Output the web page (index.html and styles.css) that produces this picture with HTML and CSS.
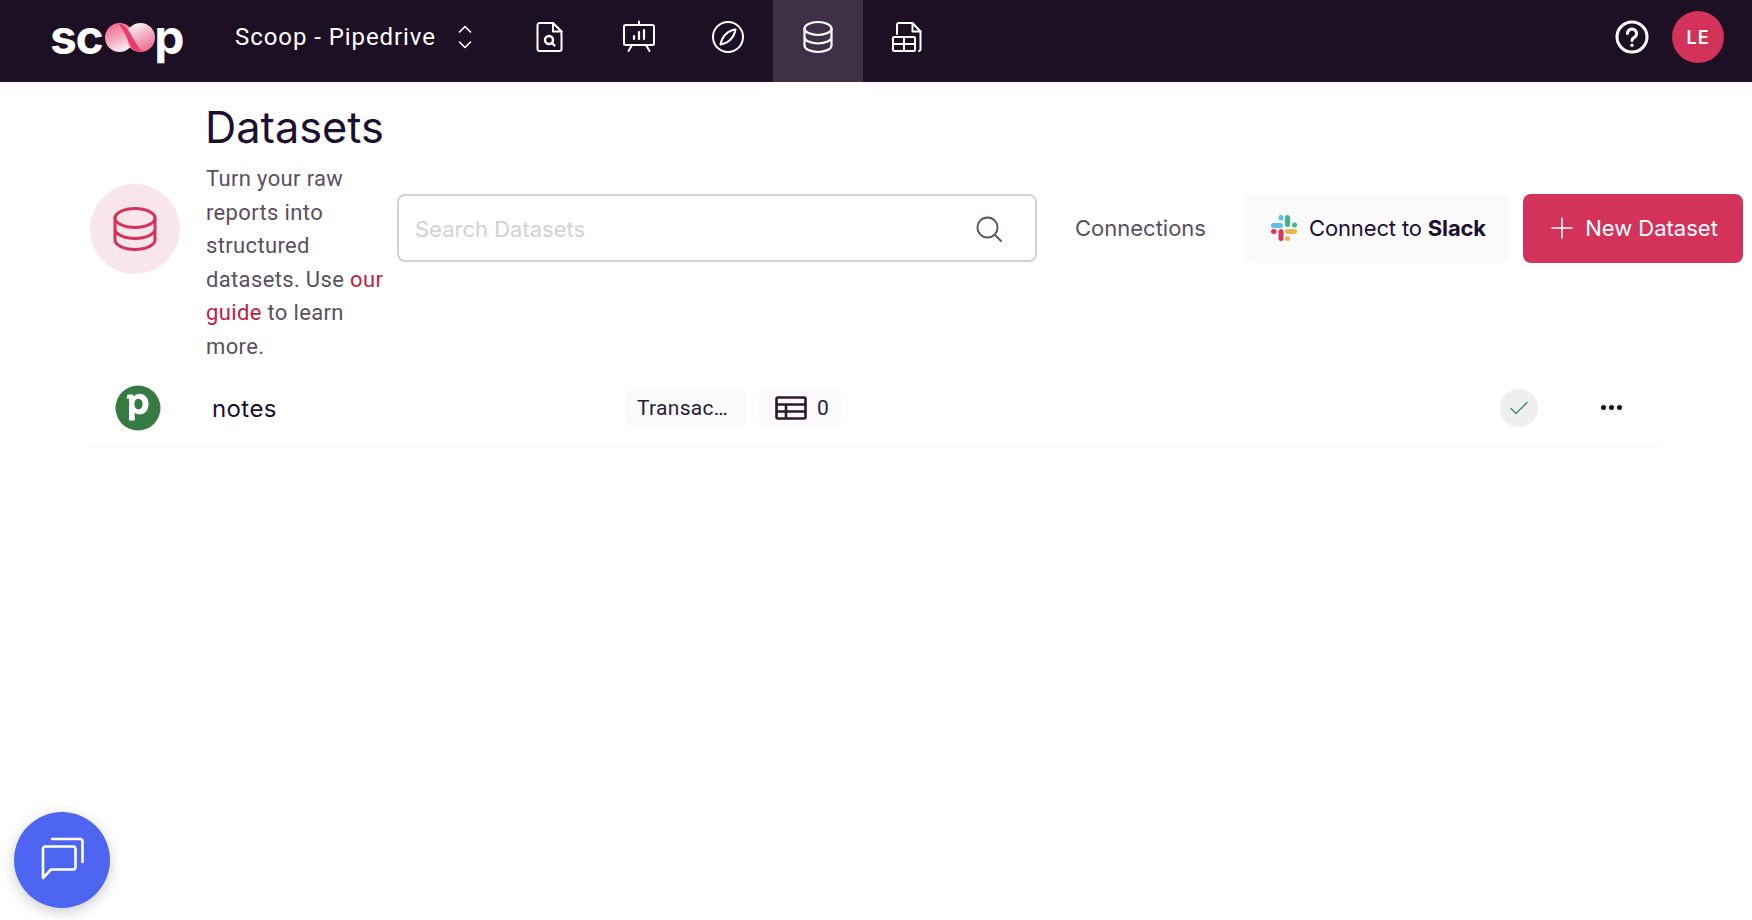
FILE: index.html
```html
<!DOCTYPE html>
<html lang="en">
<head>
<meta charset="utf-8">
<title>Datasets</title>
<link rel="stylesheet" href="styles.css">
</head>
<body>
<header class="topbar">
  <div class="logo">
    <span class="logo-text">sc</span>
    <svg class="logo-mark" viewBox="0 0 50 29" width="50" height="29" aria-hidden="true">
      <defs>
        <linearGradient id="lg1" x1="0.2" y1="0.05" x2="0.65" y2="1">
          <stop offset="0" stop-color="#ef6a90"/><stop offset="0.55" stop-color="#f3b0c3"/><stop offset="1" stop-color="#fdf3f6"/>
        </linearGradient>
        <linearGradient id="lg2" x1="0.8" y1="0.95" x2="0.35" y2="0">
          <stop offset="0" stop-color="#ef6a90"/><stop offset="0.55" stop-color="#f3b0c3"/><stop offset="1" stop-color="#fdf3f6"/>
        </linearGradient>
      </defs>
      <circle cx="14.5" cy="14.5" r="14.5" fill="url(#lg1)"/>
      <circle cx="35.5" cy="14.5" r="14.5" fill="url(#lg2)"/>
      <path d="M13 0.5 C20 1 23 6 25 9.5 C27 13 30 24 38 28.6 C30 29.5 26 25 24.5 21 C22 16 19 5 13 0.5Z" fill="#ee3a6c"/>
      <path d="M14 1 L24 9 L36 28 L26 20Z" fill="#ee3a6c"/>
    </svg>
    <span class="logo-text">p</span>
  </div>
  <div class="workspace">
    <span>Scoop - Pipedrive</span>
    <svg width="14" height="24" viewBox="0 0 14 24" fill="none" stroke="#fff" stroke-width="1.6" stroke-linecap="round" stroke-linejoin="round" aria-hidden="true"><path d="M1.5 7 7 1.5 12.5 7M1.5 17 7 22.5 12.5 17"/></svg>
  </div>
  <nav class="nav">
    <a class="nav-item">
      <svg class="shift-r" width="30" height="34" viewBox="0 0 30 34" fill="none" stroke="#fff" stroke-width="2" stroke-linecap="round" stroke-linejoin="round" aria-hidden="true"><path d="M19 3H5.5A2 2 0 0 0 3.500 5V29a2 2 0 0 0 2 2h20a2 2 0 0 0 2-2V11.500Z"/><path d="M19 3v8.500h8.500"/><circle cx="15" cy="20" r="4" stroke-width="2.400"/><path d="M18 23l2.500 2.500" stroke-width="2.400"/></svg>
    </a>
    <a class="nav-item">
      <svg class="shift-r" width="34" height="34" viewBox="0 0 34 34" fill="none" stroke="#fff" stroke-width="2" stroke-linecap="round" stroke-linejoin="round" aria-hidden="true"><rect x="2" y="5" width="30" height="20" rx="1.500"/><path d="M17 1.500V5M10 25l-3.500 6M24 25l3.500 6"/><path d="M12 19v-3M17 19v-7M22 19v-9" stroke-width="2.200"/></svg>
    </a>
    <a class="nav-item">
      <svg width="34" height="34" viewBox="0 0 34 34" fill="none" stroke="#fff" stroke-width="2" stroke-linecap="round" stroke-linejoin="round" aria-hidden="true"><circle cx="17" cy="17" r="15"/><path d="M24.500 9.500C17 10.500 11 16 9.500 24.500 17 23.500 23 18 24.500 9.500Z"/></svg>
    </a>
    <a class="nav-item is-active">
      <svg width="32" height="34" viewBox="0 0 32 34" fill="none" stroke="#fff" stroke-width="2.200" stroke-linecap="round" stroke-linejoin="round" aria-hidden="true"><ellipse cx="16" cy="8.500" rx="13.500" ry="6.500"/><path d="M2.500 8.500V25.500c0 3.600 6 6.500 13.500 6.500s13.500-2.900 13.500-6.500V8.500M2.500 17c0 3.600 6 6.500 13.500 6.500s13.500-2.900 13.500-6.500"/></svg>
    </a>
    <a class="nav-item">
      <svg class="shift-l" width="32" height="34" viewBox="0 0 32 34" fill="none" stroke="#fff" stroke-width="2" stroke-linecap="round" stroke-linejoin="round" aria-hidden="true"><path d="M6 14V5a2 2 0 0 1 2-2h13.500l8 8.500V29a2 2 0 0 1-1.500 2"/><path d="M21.500 3v8.500h8"/><rect x="2" y="17" width="22" height="14" rx="1"/><path d="M2 24h22M13 17v14"/></svg>
    </a>
  </nav>
  <div class="top-right">
    <svg width="34" height="34" viewBox="0 0 34 34" fill="none" stroke="#fff" stroke-width="3" stroke-linecap="round" stroke-linejoin="round" aria-hidden="true"><circle cx="17" cy="17" r="15"/><path d="M12.500 13.500a4.500 4.500 0 1 1 6.800 3.900c-1.500.9-2.300 1.700-2.300 3.100"/><path d="M17 25.200v.1" stroke-width="3.400"/></svg>
    <div class="avatar">LE</div>
  </div>
</header>

<main class="page">
  <section class="page-head">
    <div class="head-circle">
      <svg width="44" height="46" viewBox="0 0 44 46" fill="none" stroke="#d3325a" stroke-width="3" stroke-linecap="round" stroke-linejoin="round" aria-hidden="true"><ellipse cx="22" cy="12" rx="20" ry="9.500"/><path d="M2 12V34c0 5.200 9 9.500 20 9.500S42 39.200 42 34V12M2 23c0 5.200 9 9.500 20 9.500S42 28.200 42 23"/></svg>
    </div>
    <div class="head-text">
      <h1 class="title">Datasets</h1>
      <p class="desc">Turn your raw reports into structured datasets. Use <a class="link">our</a> <a class="link">guide</a> to learn more.</p>
    </div>
    <div class="search">
      <span class="search-ph">Search Datasets</span>
      <svg width="28" height="28" viewBox="0 0 28 28" fill="none" stroke="#5a5060" stroke-width="1.800" stroke-linecap="round" aria-hidden="true"><circle cx="12.500" cy="12.500" r="10"/><path d="M20 20l6 6"/></svg>
    </div>
    <div class="connections">Connections</div>
    <button class="btn btn-slack">
      <svg width="26" height="26" viewBox="0 0 26 26" aria-hidden="true">
        <rect x="0" y="8" width="12" height="5" rx="2.500" fill="#5cbfee"/><rect x="7.500" y="0" width="5" height="5.500" rx="2.500" fill="#5cbfee"/>
        <rect x="14" y="0" width="5" height="12" rx="2.500" fill="#3fb58a"/><rect x="21" y="7.500" width="5" height="5" rx="2.500" fill="#3fb58a"/>
        <rect x="14" y="14" width="12" height="5" rx="2.500" fill="#e8b84e"/><rect x="14" y="21" width="5" height="5" rx="2.500" fill="#e8b84e"/>
        <rect x="7.500" y="14" width="5" height="12" rx="2.500" fill="#d9365e"/><rect x="0" y="14" width="5.500" height="5" rx="2.500" fill="#d9365e"/>
      </svg>
      <span>Connect to <b>Slack</b></span>
    </button>
    <button class="btn btn-new">
      <svg width="22" height="22" viewBox="0 0 22 22" fill="none" stroke="#fff" stroke-width="1.600" stroke-linecap="round" aria-hidden="true"><path d="M11 1v20M1 11h20"/></svg>
      <span>New Dataset</span>
    </button>
  </section>

  <section class="row">
    <svg class="row-logo" width="46" height="46" viewBox="0 0 46 46" aria-hidden="true"><circle cx="23" cy="23" r="22.500" fill="#367a44"/><path transform="translate(0 -3.500)" d="M12.500 13h5.500l.6 2.300c1.400-2 3.600-3 6-3 5.400 0 9 4.300 9 10.300 0 6.200-3.800 10.400-9 10.400-2 0-3.700-.7-4.900-2V39h-5.700V17.700c0-.5-.2-.7-.7-.7h-1.800ZM23.300 17.200c-2.600 0-3.900 2.400-3.900 5.400 0 3.100 1.400 5.300 3.900 5.300 2.700 0 4.300-2.100 4.300-5.400 0-3.200-1.600-5.300-4.300-5.300Z" fill="#fff" fill-rule="evenodd"/></svg>
    <div class="row-name">notes</div>
    <div class="chip chip-type">Transac…</div>
    <div class="chip chip-count">
      <svg width="32" height="24" viewBox="0 0 32 24" fill="none" stroke="#2b1a33" stroke-width="2.600" aria-hidden="true"><rect x="1.500" y="1.500" width="29" height="21" rx="1.500"/><path d="M1.500 8.500h29M1.500 15.500h29M11 8.500v14"/></svg>
      <span>0</span>
    </div>
    <div class="status">
      <svg width="18" height="14" viewBox="0 0 18 14" fill="none" stroke="#3c8f63" stroke-width="1.400" stroke-linecap="round" stroke-linejoin="round" aria-hidden="true"><path d="M1 7.500 6 12.500 17 1.500"/></svg>
    </div>
    <div class="more"><i></i><i></i><i></i></div>
  </section>
</main>

<button class="chat" aria-label="Chat">
  <svg width="46" height="46" viewBox="0 0 46 46" fill="none" stroke="#fff" stroke-width="2.600" stroke-linecap="round" stroke-linejoin="round" aria-hidden="true"><path d="M4 12a2.500 2.500 0 0 1 2.500-2.500H34a2.500 2.500 0 0 1 2.500 2.500V30a2.500 2.500 0 0 1-2.500 2.500H12L4 41Z"/><path d="M13 2h28a2.500 2.500 0 0 1 2.500 2.500V25"/></svg>
</button>
</body>
</html>
```
FILE: styles.css
```css
* { box-sizing: border-box; }
html, body { margin: 0; height: 100%; background: #fff; }
body { font-family: "Inter", "Liberation Sans", sans-serif; color: #1b1030; overflow: hidden; }

.topbar { display: flex; align-items: center; height: 82px; padding: 0 28px 8px 50px; background: #1e1024; color: #fff; }
.logo { display: flex; align-items: flex-start; align-self: flex-start; height: 82px; width: 185px; padding-top: 23px; }
.logo-text { font-family: "Inter", sans-serif; font-weight: 700; font-size: 48px; line-height: 28px; letter-spacing: -1.5px; color: #fff; }
.logo-mark { flex: none; margin-left: 3px; margin-right: -1px; }
.workspace { display: flex; align-items: center; gap: 22px; width: 268px; font-family: "Roboto", sans-serif; font-size: 24px; letter-spacing: 0.93px; }
.nav { display: flex; align-self: flex-start; height: 82px; }
.nav-item { display: flex; align-items: center; justify-content: center; width: 90px; height: 82px; padding-bottom: 8px; }
.nav-item.is-active { background: #3f3048; }
.shift-r { margin-left: 2px; }
.shift-l { margin-right: 2px; }
.top-right { display: flex; align-items: center; gap: 23px; margin-left: auto; }
.avatar { display: flex; align-items: center; justify-content: center; width: 52px; height: 52px; border-radius: 50%; background: #d3325a; font-weight: 600; font-size: 18px; letter-spacing: 1px; }

.page-head { display: flex; align-items: center; padding: 13px 9px 0 90px; }
.head-circle { display: flex; align-items: center; justify-content: center; flex: none; width: 90px; height: 90px; border-radius: 50%; background: #f9e6ec; }
.head-text { width: 180px; flex: none; margin-left: 26px; }
.title { margin: 0 0 2px -1px; font-weight: 400; font-size: 43.300px; line-height: 65px; color: #1b1030; }
.desc { margin: 0; font-family: "Roboto", sans-serif; font-size: 22px; line-height: 33.500px; letter-spacing: 0.35px; color: #5a5060; }
.link { color: #bf2145; }
.search { display: flex; align-items: center; justify-content: space-between; flex: none; width: 640px; height: 68px; margin: 0 0 2px 11px; padding: 1px 32px 0 16px; border: 2px solid #d3d3d3; border-radius: 8px; }
.search-ph { font-size: 22px; color: #d2d2d2; }
.connections { flex: none; width: 169px; margin-left: 38px; padding-bottom: 2px; font-size: 22px; color: #5a5060; }
.btn { display: flex; align-items: center; justify-content: center; height: 69px; margin-bottom: 2px; padding: 0; border: 0; border-radius: 8px; font-family: "Inter", sans-serif; font-size: 22px; }
.btn-slack { width: 266px; gap: 12px; padding-left: 3px; background: #fafafa; color: #1b1030; }
.btn-slack span { letter-spacing: -0.15px; }
.btn-slack b { font-weight: 700; }
.btn-new { width: 220px; margin-left: 13px; gap: 12px; padding-left: 3px; background: #d3325a; color: #fff; }

.row { display: flex; align-items: center; height: 78px; margin: 6px 92px 0 90px; padding-left: 25px; border-bottom: 1px solid #f6f6f6; }
.row-logo { flex: none; }
.row-name { width: 413px; flex: none; margin-left: 51px; padding-top: 1px; font-size: 24px; letter-spacing: 0.4px; color: #1b1030; }
.chip { display: flex; align-items: center; height: 38px; border-radius: 10px; background: #fafafa; font-family: "Roboto", sans-serif; font-size: 21px; letter-spacing: 0.3px; color: #2b1a33; }
.chip-type { width: 121px; padding-left: 12px; }
.chip-count { width: 82px; margin-left: 13px; padding-left: 16px; gap: 10px; }
.status { display: flex; align-items: center; justify-content: center; flex: none; width: 38px; height: 38px; margin-left: 659px; border-radius: 50%; background: #efefef; }
.more { display: flex; gap: 3px; margin-left: 63px; }
.more i { display: block; width: 5px; height: 5px; border-radius: 50%; background: #1b1030; }

.chat { position: fixed; left: 14px; top: 812px; display: flex; align-items: center; justify-content: center; width: 96px; height: 96px; padding: 0; border: 0; border-radius: 50%; background: #4d65f0; box-shadow: 0 4px 14px rgba(0,0,0,.2); }
```
